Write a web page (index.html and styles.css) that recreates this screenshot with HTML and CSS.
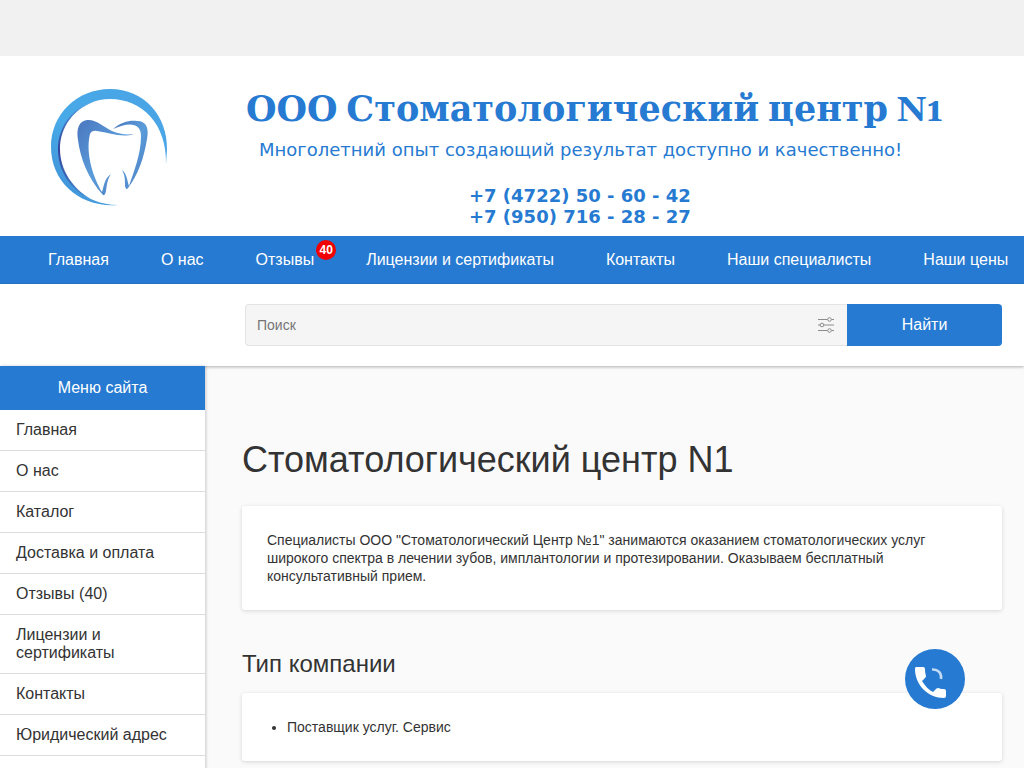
FILE: index.html
```html
<!DOCTYPE html>
<html lang="ru">
<head>
<meta charset="utf-8">
<meta name="viewport" content="width=device-width, initial-scale=1">
<title>Стоматологический центр N1</title>
<link rel="stylesheet" href="styles.css">
</head>
<body>
<div class="topbar"></div>
<header class="header">
  <a class="logo" href="#" aria-label="Стоматологический центр N1">
    <svg width="120" height="120" viewBox="0 0 120 120" aria-hidden="true">
      <defs>
        <linearGradient id="ring" x1="0" y1="1" x2="1" y2="0">
          <stop offset="0" stop-color="#3f8cd4"/>
          <stop offset=".4" stop-color="#48aae8"/>
          <stop offset="1" stop-color="#4aa3e4"/>
        </linearGradient>
        <linearGradient id="shade" x1="0" y1="0" x2="0" y2="1">
          <stop offset="0" stop-color="#4a9ade"/>
          <stop offset=".5" stop-color="#35449a"/>
          <stop offset="1" stop-color="#3f86cc"/>
        </linearGradient>
        <linearGradient id="tooth" x1="0" y1="0" x2="1" y2="1">
          <stop offset="0" stop-color="#4a76be"/>
          <stop offset=".5" stop-color="#5a9cda"/>
          <stop offset="1" stop-color="#4a78bc"/>
        </linearGradient>
      </defs>
      <path fill="url(#ring)" d="M68 117C30 120 1 94 1 59C1 26 27 1 60 1C94 1 118 28 117 62L116 76C117 36 92 11 60 11C32 11 9 33 9 61C9 92 34 117 68 117Z"/>
      <path fill="url(#shade)" d="M46 13C23 19 8 38 8 61C8 83 20 102 41 111C23 101 10 82 10 61C10 39 24 20 46 13Z"/>
      <path fill="url(#tooth)" d="M62 43C54 39 46 31 37 32C29 33 26 41 28 52C30 69 38 91 53 107Q55 108 56 103C57 97 57 92 61 86C54 91 54 98 52 104C44 91 35 66 40 46Q42 42 47 43C60 45 72 50 84 46C76 47 69 46 62 43Z"/>
      <path fill="url(#tooth)" d="M63 41C71 34 80 32 87 33C97 33 99 41 97 51C94 70 88 87 78 100Q76 103 75 98C75 92 75 87 72 82C77 86 77 92 79 98C84 83 91 66 91 48C91 34 78 34 63 41Z"/>
    </svg>
  </a>
  <div class="brand">
    <div class="brand-name">ООО Стоматологический центр N1</div>
    <div class="slogan">Многолетний опыт создающий результат доступно и качественно!</div>
    <div class="phones">
      <div>+7 (4722) 50 - 60 - 42</div>
      <div>+7 (950) 716 - 28 - 27</div>
    </div>
  </div>
</header>
<nav class="nav">
  <a href="#">Главная</a>
  <a href="#">О нас</a>
  <a href="#">Отзывы<span class="badge">40</span></a>
  <a href="#">Лицензии и сертификаты</a>
  <a href="#">Контакты</a>
  <a href="#">Наши специалисты</a>
  <a href="#">Наши цены</a>
</nav>
<div class="searchbar">
  <form class="search">
    <div class="field">
      <input class="search-input" type="search" placeholder="Поиск" aria-label="Поиск">
      <button class="filter" type="button" aria-label="Фильтры">
        <svg width="16" height="16" viewBox="0 0 16 16" fill="none" stroke="#8c8c8c" aria-hidden="true">
          <path d="M0 2.5H9.500M13.500 2.5H16M0 8H2M6 8H16M0 13.5H9.500M13.500 13.5H16"/>
          <circle cx="11.5" cy="2.5" r="1.8"/><circle cx="4" cy="8" r="1.8"/><circle cx="11.5" cy="13.5" r="1.8"/>
        </svg>
      </button>
    </div>
    <button class="submit" type="submit">Найти</button>
  </form>
</div>
<div class="layout">
  <aside class="sidebar">
    <div class="sidebar-title">Меню сайта</div>
    <a href="#">Главная</a>
    <a href="#">О нас</a>
    <a href="#">Каталог</a>
    <a href="#">Доставка и оплата</a>
    <a href="#">Отзывы (40)</a>
    <a href="#">Лицензии и сертификаты</a>
    <a href="#">Контакты</a>
    <a href="#">Юридический адрес</a>
    <a href="#" aria-label="Ещё"></a>
  </aside>
  <main class="main">
    <h1>Стоматологический центр N1</h1>
    <section class="card">
      <p>Специалисты ООО "Стоматологический Центр №1" занимаются оказанием стоматологических услуг широкого спектра в лечении зубов, имплантологии и протезировании. Оказываем бесплатный консультативный прием.</p>
    </section>
    <h2>Тип компании</h2>
    <section class="card">
      <ul><li>Поставщик услуг. Сервис</li></ul>
    </section>
  </main>
</div>
<button class="call" type="button" aria-label="Позвонить">
  <svg width="60" height="60" viewBox="0 0 60 60" aria-hidden="true">
    <path fill="#fff" d="M11 18H18Q20 18 20 20C20 23 20.500 25 21 27Q21 28 20 29L17 32C20 37 24 41 28 43L31 40Q32 39 33 39C36 40 37 40 39 40Q41 40 41 42V47Q41 49 39 49C23 49 10 36 10 20Q10 18 11 18Z"/>
    <path fill="none" stroke="#c4dbf5" stroke-width="2.500" d="M27 20.500C33 20 37 24 36 30"/>
  </svg>
</button>
</body>
</html>
```
FILE: styles.css
```css
* { box-sizing: border-box; }

body {
  margin: 0;
  height: 100vh;
  overflow: hidden;
  background: #fafafa;
  color: #333;
  font: 14px/18px "Liberation Sans", Arial, sans-serif;
}

a { color: inherit; text-decoration: none; }
button, input { font: inherit; border: 0; margin: 0; }

.topbar { height: 56px; background: #f1f1f1; }

.header {
  display: flex;
  height: 180px;
  padding: 32px 22px 0 50px;
  background: #fff;
  color: #267ad1;
}
.logo { flex: none; width: 196px; }
.logo svg { display: block; }
.brand { flex: 1; min-width: 0; white-space: nowrap; }
.brand-name {
  font: bold 35px/46px Georgia, Gelasio, "DejaVu Serif", serif;
}
.slogan {
  padding-left: 13px;
  font: 18px/32px Verdana, "DejaVu Sans", sans-serif;
}
.phones {
  padding: 19px 0 0 223px;
  font: bold 18px/21px Verdana, "DejaVu Sans", sans-serif;
}

.nav {
  display: flex;
  height: 48px;
  padding-left: 22px;
  overflow: hidden;
  background: #267ad1;
  color: #fff;
  font-size: 16px;
  line-height: 48px;
  white-space: nowrap;
}
.nav a { position: relative; flex: none; padding: 0 26px; }
.badge {
  position: absolute;
  top: 4px;
  right: 4px;
  width: 20px;
  height: 20px;
  border-radius: 50%;
  background: #f00000;
  font-size: 12px;
  font-weight: bold;
  line-height: 20px;
  text-align: center;
}

.searchbar {
  position: relative;
  padding: 20px 22px 20px 245px;
  background: #fff;
  box-shadow: 0 1px 3px rgba(0, 0, 0, .3);
}
.search { display: flex; height: 42px; }
.field {
  display: flex;
  flex: 1;
  align-items: center;
  border: 1px solid #e4e4e4;
  border-right: 0;
  border-radius: 4px 0 0 4px;
  background: #f5f5f5;
}
.search-input {
  flex: 1;
  min-width: 0;
  height: 40px;
  padding: 0 11px;
  background: none;
  color: #333;
  appearance: none;
}
.search-input::placeholder { color: #757575; }
.filter { display: flex; padding: 0 13px; background: none; }
.submit {
  width: 155px;
  border-radius: 0 4px 4px 0;
  background: #267ad1;
  color: #fff;
  font-size: 16px;
}

.layout { display: flex; }
.sidebar {
  position: relative;
  flex: none;
  width: 205px;
  background: #fff;
  box-shadow: 1px 0 3px rgba(0, 0, 0, .2);
  font-size: 16px;
}
.sidebar-title {
  background: #267ad1;
  color: #fff;
  line-height: 44px;
  text-align: center;
}
.sidebar a {
  display: block;
  min-height: 41px;
  padding: 11px 16px;
  border-bottom: 1px solid #ddd;
}

.main { flex: 1; min-width: 0; padding: 72px 22px 0 37px; }
h1, h2 { margin: 0; font-weight: 400; }
h1 { margin-bottom: 24px; font-size: 36px; line-height: 44px; }
h2 { margin: 40px 0 15px; font-size: 24px; line-height: 28px; }
.card {
  padding: 25px;
  border-radius: 3px;
  background: #fff;
  box-shadow: 0 1px 4px rgba(0, 0, 0, .15);
}
.card p { margin: 0; }
.card ul { margin: 0; padding-left: 20px; }

.call {
  position: fixed;
  right: 59px;
  bottom: 59px;
  width: 60px;
  height: 60px;
  padding: 0;
  border-radius: 50%;
  background: #267ad1;
}
.call svg { display: block; }
```
